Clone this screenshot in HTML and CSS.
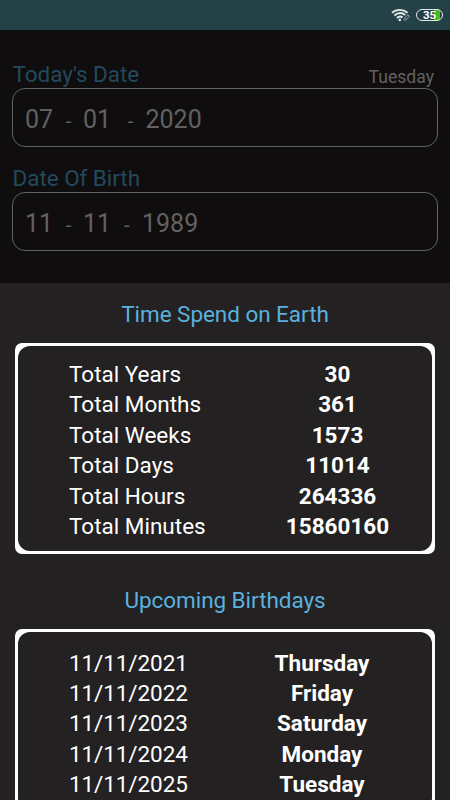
FILE: index.html
```html
<!DOCTYPE html>
<html lang="en">
<head>
  <meta charset="UTF-8" />
  <meta name="viewport" content="width=device-width, initial-scale=1.0"/>
  <title>Age Calculator</title>
  <link rel="stylesheet" href="styles.css">
</head>
<body>

  <header class="status-bar">
    <svg class="wifi" width="20" height="14" viewBox="0 0 20 14" fill="none" stroke="#e4eaea" stroke-width="1.9">
      <path d="M1 4.9C5.5 0.9 12 0.9 16.6 4.7" />
      <path d="M3.4 7.5C7 4.4 11 4.4 14.3 7.1" />
      <path d="M5.8 10C7.8 8.3 10 8.3 11.6 9.6" />
      <circle cx="8.8" cy="11.9" r="1.3" fill="#e4eaea" stroke="none" />
      <path d="M13.3 10.2l3.6-3.4 1.5 1.6-3.6 3.4zM12.6 11.3l1.5 1.5" stroke="#a9b9b9" stroke-width="0.9" />
    </svg>
    <span class="battery">35</span>
  </header>

  <section class="form-section">
    <div class="field-head">
      <label class="field-label">Today's Date</label>
      <span class="weekday">Tuesday</span>
    </div>
    <div class="date-box">
      <span class="month">07</span><span class="dash">-</span>
      <span class="day">01</span><span class="dash">-</span>
      <span class="year">2020</span>
    </div>
    <div class="field-head">
      <label class="field-label">Date Of Birth</label>
    </div>
    <div class="date-box birth">
      <span class="month">11</span><span class="dash">-</span>
      <span class="day">11</span><span class="dash">-</span>
      <span class="year">1989</span>
    </div>
  </section>

  <main class="results">
    <h2>Time Spend on Earth</h2>
    <div class="card">
      <div class="card-body">
        <div class="row"><span>Total Years</span><b>30</b></div>
        <div class="row"><span>Total Months</span><b>361</b></div>
        <div class="row"><span>Total Weeks</span><b>1573</b></div>
        <div class="row"><span>Total Days</span><b>11014</b></div>
        <div class="row"><span>Total Hours</span><b>264336</b></div>
        <div class="row"><span>Total Minutes</span><b>15860160</b></div>
      </div>
    </div>

    <h2 class="second">Upcoming Birthdays</h2>
    <div class="card">
      <div class="card-body birthdays">
        <div class="row"><span>11/11/2021</span><b>Thursday</b></div>
        <div class="row"><span>11/11/2022</span><b>Friday</b></div>
        <div class="row"><span>11/11/2023</span><b>Saturday</b></div>
        <div class="row"><span>11/11/2024</span><b>Monday</b></div>
        <div class="row"><span>11/11/2025</span><b>Tuesday</b></div>
      </div>
    </div>
  </main>

</body>
</html>
```

FILE: styles.css
```css
* {
  box-sizing: border-box;
}
body {
  margin: 0;
  height: 800px;
  overflow: hidden;
  font-family: Roboto, "Liberation Sans", sans-serif;
  background-color: #232122;
  color: #fff;
}
.status-bar {
  height: 30px;
  padding: 0 7px 0 0;
  background-color: #234147;
  display: flex;
  align-items: center;
  justify-content: flex-end;
  gap: 5px;
}
.battery {
  width: 27px;
  height: 12px;
  border: 1.5px solid #e4eaea;
  border-radius: 6px;
  background: linear-gradient(to right, #234147 17px, #43bd22 17px, #43bd22 23px, #234147 23px);
  font-size: 11.5px;
  font-weight: bold;
  line-height: 11px;
  text-align: center;
}
.form-section {
  height: 253px;
  padding: 29px 12px 0;
  background-color: #0f0d0e;
}
.field-head {
  height: 29px;
  display: flex;
  align-items: flex-start;
  justify-content: space-between;
  line-height: 30px;
}
.field-label {
  padding-left: 0.5px;
  font-size: 22.5px;
  letter-spacing: -0.05px;
  color: #23495d;
}
.weekday {
  padding-right: 4px;
  font-size: 17.6px;
  line-height: 36px;
  color: #626162;
}
.date-box {
  height: 59px;
  margin-bottom: 16px;
  padding-left: 12px;
  border: 1.5px solid #626162;
  border-radius: 13px;
  display: flex;
  align-items: baseline;
  font-size: 25px;
  line-height: 61px;
  color: #626162;
}
.month, .day {
  width: 29px;
}
.dash {
  width: 29px;
  font-size: 20px;
  text-align: center;
}
.day + .dash {
  width: 34px;
  padding-left: 3px;
}
.birth .day + .dash {
  width: 29.5px;
  padding-left: 0;
}
.year {
  margin-left: -0.5px;
}
.birth .year {
  margin-left: 0.5px;
}
.results {
  padding: 0 15px;
}
h2 {
  margin: 0;
  height: 60px;
  padding-top: 16px;
  font-size: 22.5px;
  font-weight: normal;
  letter-spacing: -0.05px;
  line-height: 30px;
  text-align: center;
  color: #5ab1df;
}
.second {
  height: 75px;
  padding-top: 31px;
}
.card {
  padding: 3px;
  border-radius: 7px;
  background-color: #fff;
}
.card-body {
  padding: 13px 0 9.6px 51px;
  border-radius: 12px;
  background-color: #232122;
}
.birthdays {
  padding: 15.6px 0 10px 51px;
}
.row {
  display: grid;
  grid-template-columns: 178px 181px;
  font-size: 22.5px;
  line-height: 30.4px;
}
.birthdays .row {
  grid-template-columns: 178px 150px;
}
.birthdays .row span {
  letter-spacing: -0.1px;
}
.row b {
  text-align: center;
}
```
